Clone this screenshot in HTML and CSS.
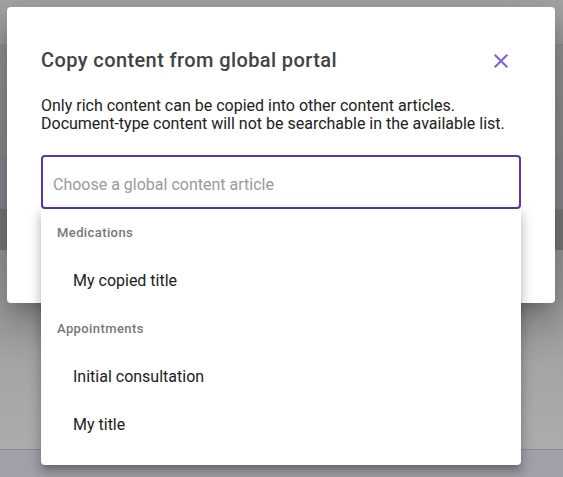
FILE: index.html
```html
<!DOCTYPE html>
<html lang="en">
<head>
<meta charset="utf-8">
<title>Copy content from global portal</title>
<link rel="stylesheet" href="styles.css">
</head>
<body>
<div class="backdrop">
  <div class="band band-top"></div>
  <div class="band band-a"></div>
  <div class="band band-b"></div>
  <div class="band band-c"></div>
  <div class="band band-d"></div>
  <div class="band band-e"></div>
</div>

<div class="dialog" role="dialog" aria-labelledby="dlg-title">
  <div class="dialog-head">
    <h2 id="dlg-title" class="dialog-title">Copy content from global portal</h2>
    <button class="close-btn" aria-label="Close">
      <svg viewBox="0 0 24 24" width="24" height="24"><path d="M19 6.41L17.59 5 12 10.59 6.41 5 5 6.41 10.59 12 5 17.59 6.41 19 12 13.41 17.59 19 19 17.59 13.41 12z"/></svg>
    </button>
  </div>
  <p class="dialog-text">Only rich content can be copied into other content articles.<br>Document-type content will not be searchable in the available list.</p>
  <div class="combo">
    <div class="combo-input">Choose a global content article</div>
    <ul class="menu">
      <li class="menu-group">Medications</li>
      <li class="menu-item">My copied title</li>
      <li class="menu-group">Appointments</li>
      <li class="menu-item">Initial consultation</li>
      <li class="menu-item">My title</li>
    </ul>
  </div>
</div>
</body>
</html>
```

FILE: styles.css
```css
* { box-sizing: border-box; }
html, body {
  margin: 0;
  padding: 0;
  width: 563px;
  height: 477px;
  overflow: hidden;
  font-family: Roboto, "Noto Sans", "Liberation Sans", sans-serif;
}
body { position: relative; background: #9e9e9e; }

.backdrop {
  display: flex;
  flex-direction: column;
  height: 477px;
}
.band { flex: none; }
.band-top { height: 45px; background: linear-gradient(#a6a6a6, #9c9c9c); border-bottom: 1px solid #8c8c8c; }
.band-a { height: 112px; background: linear-gradient(#939393, #8c8c8c); }
.band-b { height: 52px; background: #88888f; }
.band-c { height: 41px; background: #7a7a7a; }
.band-d { height: 200px; background: linear-gradient(#9a9a9a, #acacac); border-bottom: 1px solid #8e8e8e; }
.band-e { flex: 1; background: #a0a0a8; }

.dialog {
  position: absolute;
  left: 7px;
  top: 7px;
  width: 548px;
  height: 296px;
  background: #fff;
  border-radius: 4px;
  padding: 41px 34px 0 34px;
  box-shadow: 0 11px 15px -7px rgba(0,0,0,.2), 0 24px 38px 3px rgba(0,0,0,.14), 0 9px 46px 8px rgba(0,0,0,.12);
}
.dialog-head {
  display: flex;
  justify-content: space-between;
  align-items: flex-start;
  padding-right: 8px;
}
.dialog-title {
  margin: 0;
  font-size: 20px;
  line-height: 24px;
  font-weight: 500;
  letter-spacing: 0.4px;
  color: #424242;
}
.close-btn {
  border: 0;
  background: none;
  padding: 0;
  margin-top: 1px;
  width: 24px;
  height: 24px;
  cursor: pointer;
}
.close-btn svg { display: block; fill: #7e5fe6; }

.dialog-text {
  margin: 24px 0 0 0;
  font-size: 16px;
  line-height: 18px;
  color: #212121;
}

.combo {
  position: relative;
  margin-top: 22px;
}
.combo-input {
  height: 54px;
  border: 2px solid #5e35b1;
  border-radius: 4px;
  padding: 18px 10px 12px;
  font-size: 16px;
  line-height: 20px;
  color: #9a9a9a;
}
.menu {
  position: absolute;
  left: 0;
  right: 0;
  top: 54px;
  margin: 0;
  padding: 0 0 16px 0;
  list-style: none;
  background: #fff;
  border-radius: 0 0 4px 4px;
  box-shadow: 0 5px 5px -3px rgba(0,0,0,.2), 0 8px 10px 1px rgba(0,0,0,.14), 0 3px 14px 2px rgba(0,0,0,.12);
}
.menu-group {
  height: 48px;
  line-height: 48px;
  padding-left: 16px;
  font-size: 13px;
  font-weight: 500;
  letter-spacing: 0.4px;
  color: #777;
}
.menu-item {
  height: 48px;
  line-height: 48px;
  padding-left: 32px;
  font-size: 16px;
  color: #212121;
}
```
